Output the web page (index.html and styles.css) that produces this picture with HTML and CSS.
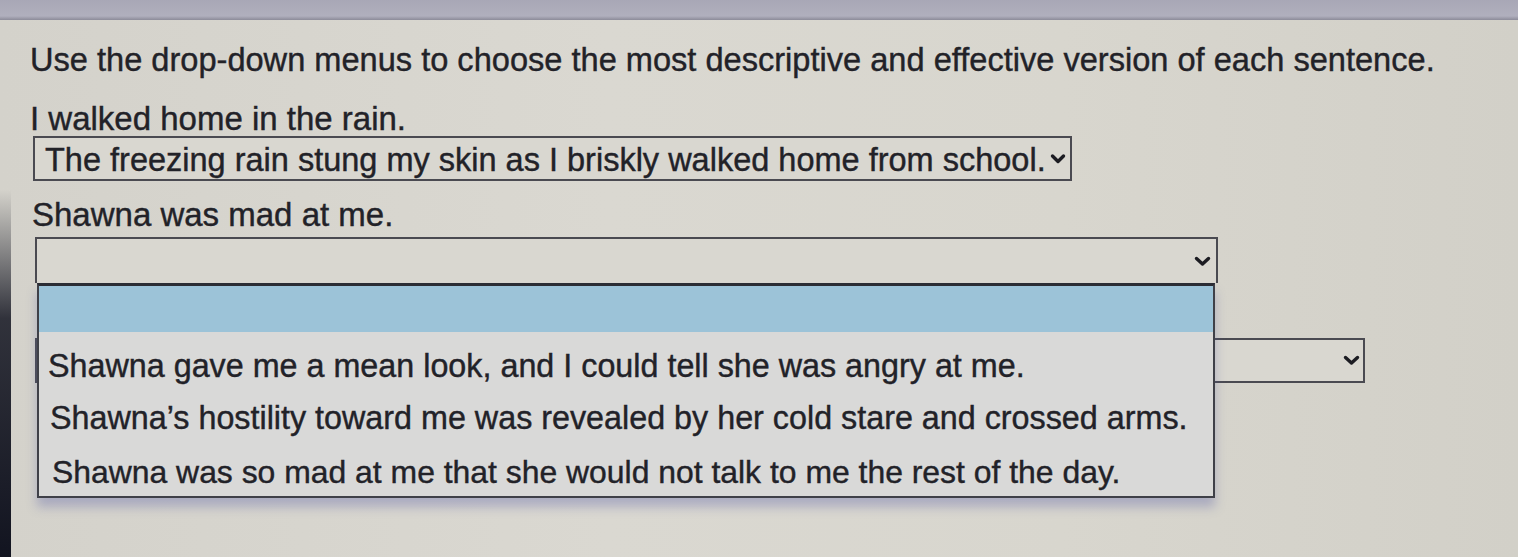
FILE: index.html
```html
<!DOCTYPE html>
<html>
<head>
<meta charset="utf-8">
<link rel="stylesheet" href="styles.css">
</head>
<body>
<div class="topband"></div>
<div class="panel">
  <p class="title">Use the drop-down menus to choose the most descriptive and effective version of each sentence.</p>
  <p class="prompt p1">I walked home in the rain.</p>
  <div class="select s1">
    <span class="value">The freezing rain stung my skin as I briskly walked home from school.</span>
    <svg class="chev" width="16" height="12" viewBox="0 0 16 12"><polyline points="2.5,3 8,8.5 13.5,3" fill="none" stroke="#1c1c22" stroke-width="3.4" stroke-linecap="round" stroke-linejoin="round"/></svg>
  </div>
  <p class="prompt p2">Shawna was mad at me.</p>
  <div class="dropwrap">
    <div class="select s2">
      <svg class="chev" width="17" height="11" viewBox="0 0 17 11"><polyline points="2.5,2.5 8.5,8 14.5,2.5" fill="none" stroke="#1c1c22" stroke-width="3.4" stroke-linecap="round" stroke-linejoin="round"/></svg>
    </div>
    <ul class="menu">
      <li class="opt blank"></li>
      <li class="opt o1">Shawna gave me a mean look, and I could tell she was angry at me.</li>
      <li class="opt o2">Shawna’s hostility toward me was revealed by her cold stare and crossed arms.</li>
      <li class="opt o3">Shawna was so mad at me that she would not talk to me the rest of the day.</li>
    </ul>
  </div>
  <div class="row3">
    <div class="select s3">
      <svg class="chev" width="17" height="11" viewBox="0 0 17 11"><polyline points="2.5,2.5 8.5,8 14.5,2.5" fill="none" stroke="#1c1c22" stroke-width="3.4" stroke-linecap="round" stroke-linejoin="round"/></svg>
    </div>
  </div>
</div>
</body>
</html>
```
FILE: styles.css
```css
html, body {
  margin: 0;
  padding: 0;
  height: 100%;
  overflow: hidden;
}
body {
  background: #d8d6cf;
  font-family: "Liberation Sans", Arial, sans-serif;
  color: #222228;
}
.topband {
  height: 20px;
  background: linear-gradient(180deg, #a8a7b6 0%, #b0afbd 80%, #8c8b99 100%);
}
.panel {
  position: relative;
  height: 537px;
  padding-left: 30px;
  padding-top: 23px;
  background: linear-gradient(90deg, #d4d2cb 0%, #dad8d1 40%, #d8d6ce 70%, #d2d0c8 100%);
  box-sizing: border-box;
}
.panel::before {
  content: "";
  position: absolute;
  left: 0;
  top: 170px;
  bottom: 0;
  width: 11px;
  background: linear-gradient(180deg, rgba(20,22,34,0) 0%, rgba(20,22,34,0.85) 35%, #121420 100%);
}
p {
  margin: 0;
}
.title,
.prompt {
  font-size: 33px;
  line-height: 34px;
  -webkit-text-stroke: 0.4px #222228;
}
.title {
  font-size: 32.6px;
}
.p1 {
  margin-top: 25px;
}
.select {
  display: flex;
  align-items: center;
  box-sizing: border-box;
  border: 2px solid #4a4a51;
  background: #d9d7d0;
}
.chev {
  flex-shrink: 0;
}
.s1 {
  margin-left: 3px;
  width: 1039px;
  height: 45px;
  padding-left: 10px;
  padding-right: 4px;
}
.s1 .value {
  font-size: 32.5px;
  line-height: 40px;
  padding-top: 3px;
  white-space: nowrap;
  -webkit-text-stroke: 0.4px #222228;
}
.s1 .chev {
  margin-left: auto;
  margin-top: 1px;
}
.p2 {
  margin-top: 17px;
  margin-left: 2px;
}
.dropwrap {
  position: relative;
  margin-top: 5px;
  margin-left: 5px;
  width: 1183px;
}
.s2 {
  height: 46px;
  justify-content: flex-end;
  padding-right: 5px;
  border-bottom: none;
}
.menu {
  position: absolute;
  left: 2px;
  top: 46px;
  width: 1178px;
  margin: 0;
  padding: 0;
  list-style: none;
  background: #d9d9d8;
  border: 2px solid #3f4048;
  border-top: 3px solid #2a2c34;
  box-shadow: 0 9px 10px rgba(90, 95, 165, 0.35);
  z-index: 2;
  box-sizing: border-box;
}
.opt {
  height: 52px;
  line-height: 52px;
  font-size: 32.3px;
  padding-left: 9px;
  white-space: nowrap;
  -webkit-text-stroke: 0.4px #222228;
}
.opt.blank {
  height: 46px;
  background: #9cc3d8;
}
.opt.o1 {
  margin-top: 8px;
}
.opt.o2 {
  padding-left: 11px;
}
.opt.o3 {
  padding-left: 13px;
  line-height: 56px;
  font-size: 31.9px;
}
.row3 {
  padding-top: 55px;
}
.s3 {
  margin-left: 5px;
  width: 1330px;
  height: 45px;
  justify-content: flex-end;
  padding-right: 3px;
}
```
